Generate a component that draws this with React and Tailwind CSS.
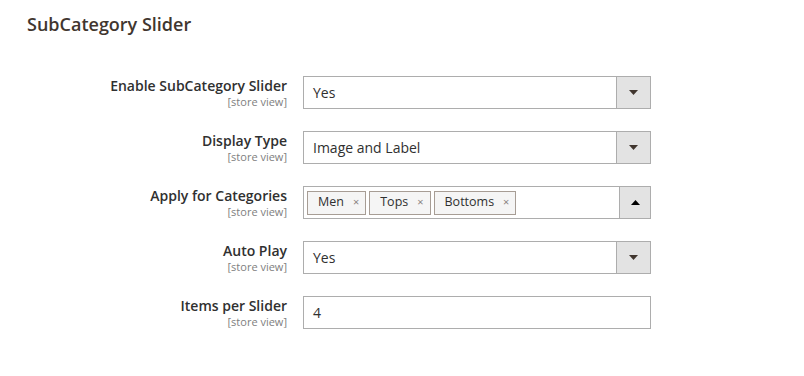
import React from "react";

const font = { fontFamily: '"Open Sans", "Noto Sans", sans-serif' };

function Arrow({ up }) {
    return (<svg width="9" height="5" viewBox="0 0 9 5" className="block">
        {up ? <path d="M0 5 L4.5 0 L9 5 Z" fill="#000000" /> : <path d="M0 0 L9 0 L4.5 5 Z" fill="#41362f" />}
    </svg>);
}

function Label({ text }) {
    return (<div className="w-[287px] shrink-0 pt-[2px] text-right">
        <div className="text-[14px] leading-4 font-semibold text-[#303030]">{text}</div>
        <div className="mt-[1px] text-[11px] leading-[14px] text-[#808080]">[store view]</div>
    </div>);
}

function Select({ value }) {
    return (<div className="flex h-[33px] w-[348px] border border-[#adadad] bg-white">
        <div className="flex flex-1 items-center pl-[9px] text-[14px] text-[#303030]">{value}</div>
        <div className="flex w-[34px] items-center justify-center border-l border-[#adadad] bg-[#e3e3e3]">
            <Arrow />
        </div>
    </div>);
}

function Tag({ label }) {
    return (<div className="flex h-[24px] items-center border border-[#a79d95] bg-[#f5f5f5] pl-[10px] pr-[6px] text-[12.5px] text-[#303030]">
        <span>{label}</span>
        <span className="ml-[9px] text-[11px] text-[#8a8380]">×</span>
    </div>);
}

function MultiSelect({ tags }) {
    return (<div className="flex h-[33px] w-[348px] border border-[#adadad] bg-white">
        <div className="flex flex-1 items-center gap-[3px] pl-[3px]">
            {tags.map((t) => <Tag key={t} label={t} />)}
        </div>
        <div className="flex w-[31px] items-center justify-center border-l border-[#adadad] bg-[#e3e3e3]">
            <Arrow up />
        </div>
    </div>);
}

export default function App() {
    const rows = [
        { label: "Enable SubCategory Slider", field: <Select value="Yes" /> },
        { label: "Display Type", field: <Select value="Image and Label" /> },
        { label: "Apply for Categories", field: <MultiSelect tags={["Men", "Tops", "Bottoms"]} /> },
        { label: "Auto Play", field: <Select value="Yes" /> },
        {
            label: "Items per Slider",
            field: (<div className="flex h-[33px] w-[348px] items-center border border-[#adadad] bg-white pl-[9px] text-[14px] text-[#303030]">4</div>),
        },
    ];
    return (<div className="h-[376px] w-[804px] bg-white" style={font}>
        <div className="pl-[27px] pt-[13px]">
            <h2 className="text-[18px] leading-[22px] font-semibold text-[#41362f]">SubCategory Slider</h2>
        </div>
        <div className="mt-[41px] flex flex-col gap-[22px]">
            {rows.map((r) => (<div key={r.label} className="flex gap-4">
                <Label text={r.label} />
                {r.field}
            </div>))}
        </div>
    </div>);
}
